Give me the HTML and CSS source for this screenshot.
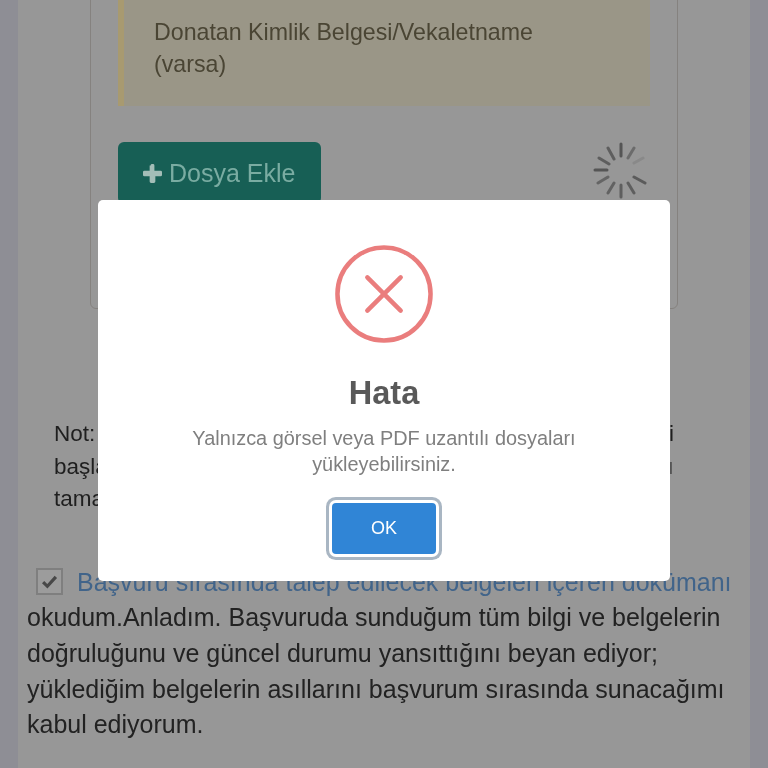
FILE: index.html
```html
<!DOCTYPE html>
<html lang="tr">
<head>
<meta charset="utf-8">
<title>Hata</title>
<link rel="stylesheet" href="styles.css">
</head>
<body>
<main class="page">
  <section class="card">
    <div class="notice">Donatan Kimlik Belgesi/Vekaletname<br>(varsa)</div>
    <div class="upload-row">
      <button class="add-btn"><svg class="plus" viewBox="0 0 20 20"><path d="M8 1.5q0-1.5 1.5-1.5h1q1.5 0 1.5 1.5V7h6.5q1.500 0 1.500 1.500v3q0 1.500-1.500 1.500H13v5.500q0 1.500-1.500 1.500h-3q-1.500 0-1.500-1.500V13H1.500Q0 13 0 11.500v-3Q0 7 1.500 7H7V1.500z"/></svg>Dosya Ekle</button>
      <svg class="spinner" viewBox="0 0 60 60">
        <g stroke-width="3" stroke-linecap="round" stroke="#555">
          <line x1="30" y1="3" x2="30" y2="15"/>
          <line x1="43" y1="7" x2="37" y2="17" opacity=".65"/>
          <line x1="52" y1="17" x2="43" y2="22" opacity=".2"/>
          <line x1="54" y1="42" x2="43" y2="36" opacity=".9"/>
          <line x1="43" y1="52" x2="37" y2="42" opacity=".85"/>
          <line x1="30" y1="56" x2="30" y2="44" opacity=".85"/>
          <line x1="17" y1="52" x2="23" y2="42" opacity=".8"/>
          <line x1="7" y1="42" x2="17" y2="36" opacity=".75"/>
          <line x1="4" y1="29" x2="16" y2="29"/>
          <line x1="8" y1="17" x2="18" y2="23" opacity=".85"/>
          <line x1="17" y1="7" x2="23" y2="18" opacity=".85"/>
        </g>
      </svg>
    </div>
  </section>
  <div class="note">
    <div class="note-line"><span>Not: lütfen</span><span>i</span></div>
    <div class="note-line"><span>başlamadan</span><span class="faint">ı</span></div>
    <div class="note-line"><span>tamamlayın</span></div>
  </div>
  <p class="consent"><span class="check"><svg viewBox="0 0 16 16"><path d="M2 8.5l4 4L14 3.6" /></svg></span><a class="doc-link">Başvuru sırasında talep edilecek belgeleri içeren dokümanı</a> okudum.Anladım. Başvuruda sunduğum tüm bilgi ve belgelerin doğruluğunu ve güncel durumu yansıttığını beyan ediyor; yüklediğim belgelerin asıllarını başvurum sırasında sunacağımı kabul ediyorum.</p>
</main>
<div class="modal" role="dialog">
  <svg class="err-icon" viewBox="0 0 100 100">
    <circle cx="50" cy="50" r="47.5"/>
    <path d="M33 33l34 34M67 33L33 67"/>
  </svg>
  <h2 class="title">Hata</h2>
  <p class="msg">Yalnızca görsel veya PDF uzantılı dosyaları yükleyebilirsiniz.</p>
  <button class="ok">OK</button>
</div>
</body>
</html>
```
FILE: styles.css
```css
* { box-sizing: border-box; }
html, body { margin: 0; height: 768px; overflow: hidden; }
body {
  position: relative;
  background: #8e8e95;
  font-family: "Liberation Sans", Arial, sans-serif;
  color: #262626;
  filter: blur(0.4px);
}
.page {
  height: 768px;
  margin: 0 18px;
  background: #979797;
  overflow: hidden;
  padding-top: 1px;
}
.card {
  margin: -32px 0 0 72px;
  width: 588px;
  height: 340px;
  padding: 0 27px;
  border: 1px solid #85827f;
  border-radius: 6px;
}
.notice {
  background: #9a9687;
  border-left: 6px solid #a89a70;
  padding: 46px 20px 26px 30px;
  font-size: 23.2px;
  line-height: 32px;
  color: #4a4534;
}
.upload-row {
  display: flex;
  justify-content: space-between;
  align-items: flex-start;
  margin-top: 36px;
}
.add-btn {
  display: flex;
  align-items: center;
  gap: 7px;
  width: 203px;
  height: 62px;
  padding: 0 0 0 25px;
  border: 0;
  border-radius: 6px;
  background: #175f55;
  color: #7aaca2;
  font: 25px "Liberation Sans", Arial, sans-serif;
}
.plus { width: 19px; height: 19px; fill: #a3bdb7; }
.spinner { width: 60px; height: 60px; margin: -1px -1px 0 0; }
.note {
  margin: 109px 0 0 36px;
  width: 620px;
  font-size: 22.5px;
  line-height: 32.5px;
  color: #1f1f1f;
}
.note-line { display: flex; justify-content: space-between; }
.faint { color: #555; }
.consent {
  margin: 49px 0 0 9px;
  width: 715px;
  font-size: 25px;
  line-height: 35.7px;
  color: #222;
}
.check {
  display: inline-block;
  width: 27px;
  height: 27px;
  margin: 0 14px 0 9px;
  padding: 3px;
  vertical-align: -4px;
  border: 2px solid #7f7f7f;
  background: #9c9c9c;
}
.check svg { display: block; width: 100%; height: 100%; fill: none; stroke: #484848; stroke-width: 3; }
.doc-link { color: #41648a; }
.modal {
  position: absolute;
  left: 98px;
  top: 200px;
  width: 572px;
  height: 381px;
  padding-top: 45px;
  background: #fff;
  border-radius: 5px;
  text-align: center;
}
.err-icon {
  display: block;
  width: 98px;
  height: 98px;
  margin: 0 auto;
  fill: none;
  stroke: #ea7d7d;
  stroke-width: 4.6;
  stroke-linecap: round;
}
.title {
  margin: 30px 0 0;
  font-size: 32.5px;
  line-height: 40px;
  font-weight: 700;
  color: #595959;
}
.msg {
  margin: 12px auto 0;
  width: 440px;
  font-size: 19.9px;
  line-height: 26px;
  color: #7f7f7f;
}
.ok {
  display: block;
  width: 104px;
  height: 51px;
  margin: 26px auto 0;
  border: 0;
  border-radius: 4px;
  background: #3085d6;
  color: #fff;
  font: 18px "Liberation Sans", Arial, sans-serif;
  box-shadow: 0 0 0 3px #fff, 0 0 0 6px #a9b6c3;
}
```
